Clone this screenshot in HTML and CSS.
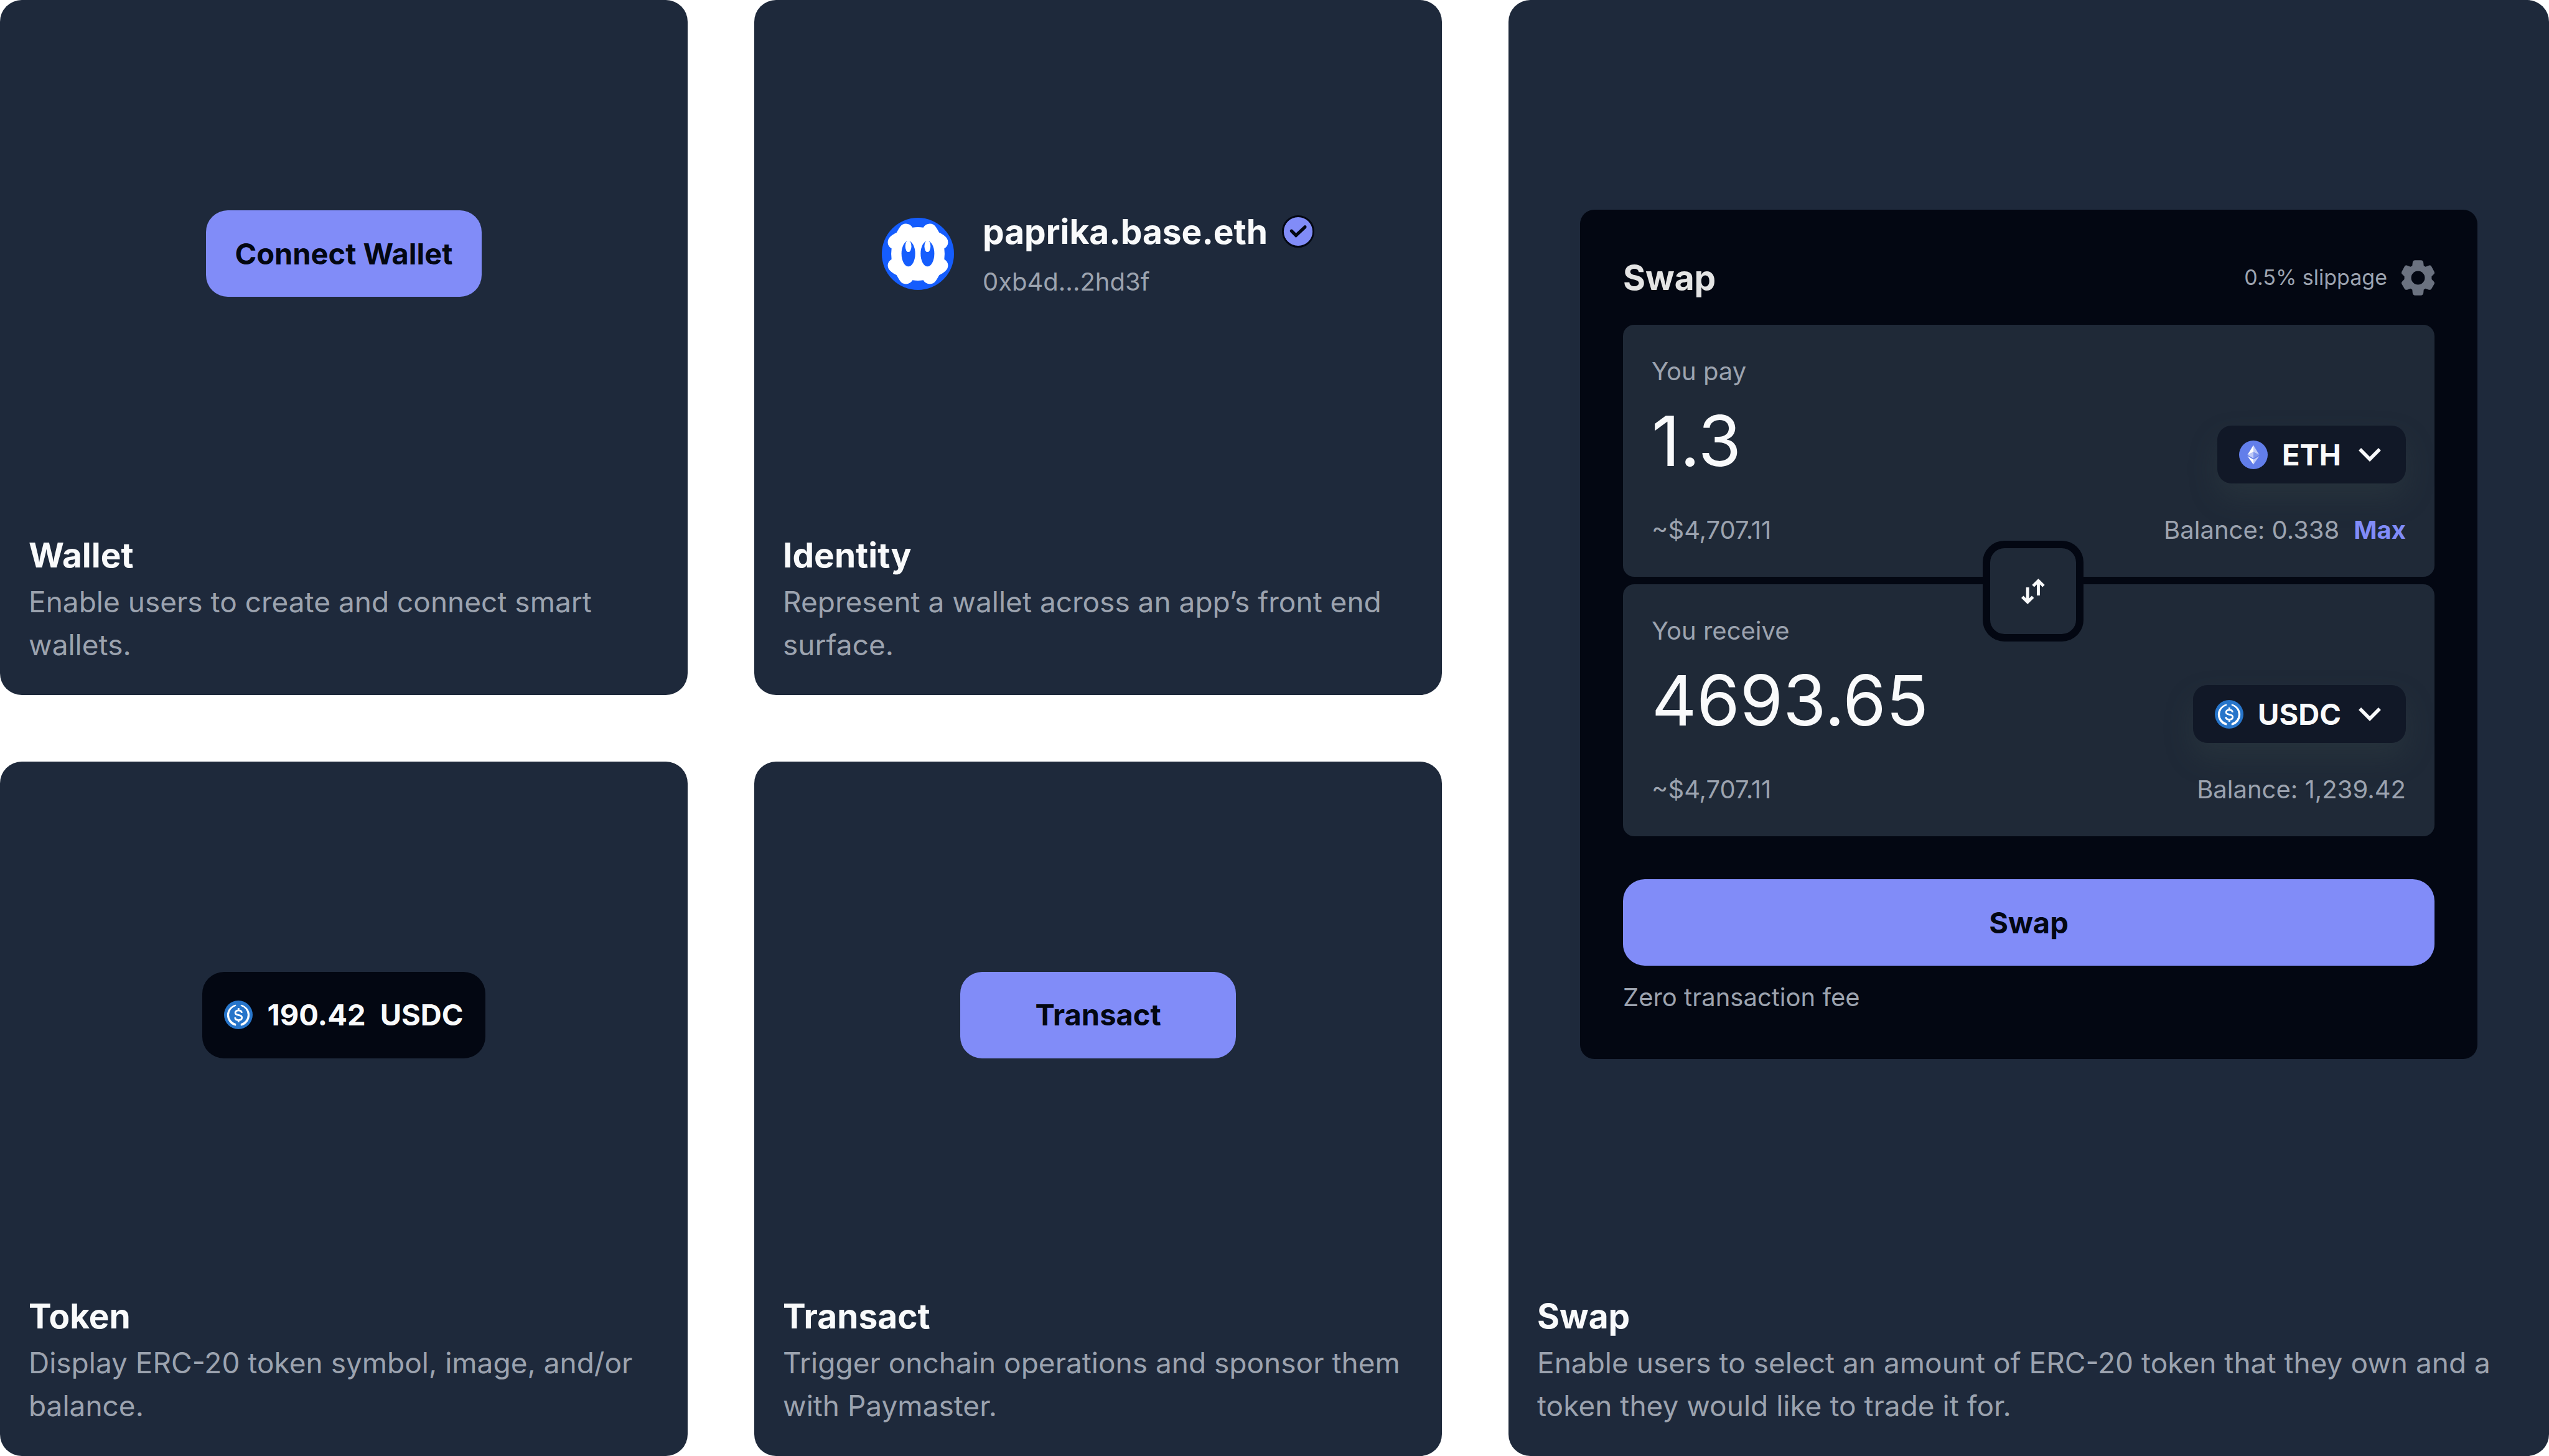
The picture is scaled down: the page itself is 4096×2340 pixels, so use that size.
FILE: index.html
```html
<!DOCTYPE html>
<html lang="en">
<head>
<meta charset="utf-8">
<title>Onchain components</title>
<link rel="stylesheet" href="styles.css">
</head>
<body>
<svg class="defs" aria-hidden="true">
  <symbol id="usdc" viewBox="0 0 80 80">
    <circle cx="40" cy="40" r="40" fill="#2775ca"/>
    <path d="M32 11.700a30 30 0 0 0 0 58.600c1 .2 1.500-.400 1.500-1.300v-2.800c0-.8-.5-1.500-1.300-1.800a25.500 25.500 0 0 1 0-48.800c.8-.3 1.300-1 1.300-1.800V13c0-.9-.5-1.500-1.500-1.300z" fill="#fff"/>
    <path d="M48 11.700a30 30 0 0 1 0 58.600c-1 .2-1.500-.400-1.500-1.300v-2.800c0-.8.5-1.500 1.300-1.800a25.500 25.500 0 0 0 0-48.800c-.8-.3-1.300-1-1.300-1.800V13c0-.9.5-1.500 1.500-1.300z" fill="#fff"/>
    <path d="M49.500 34.500c-.3-4.500-4-7-9-7s-9 2.600-9 7c0 4.200 3.500 5.300 9 6.200s9.500 2.300 9.500 6.900c0 4.500-4 7.200-9.500 7.200s-9.500-2.700-9.800-7.500M40.500 21v7M40.500 54v7" fill="none" stroke="#fff" stroke-width="4.800"/>
  </symbol>
  <symbol id="chevron" viewBox="0 0 80 80">
    <path d="M12.300 24.500 40 52.300 67.700 24.500" fill="none" stroke="#f9fafb" stroke-width="9.700"/>
  </symbol>
</svg>
<main class="board">
  <section class="card">
    <div class="preview"><button class="btn" type="button">Connect Wallet</button></div>
    <div class="caption">
      <h2>Wallet</h2>
      <p>Enable users to create and connect smart wallets.</p>
    </div>
  </section>

  <section class="card">
    <div class="preview">
      <div class="identity">
        <svg class="avatar" viewBox="0 0 200 200" role="img" aria-label="Avatar">
          <circle cx="100" cy="100" r="100" fill="#155dfd"/>
          <path fill="#fff" d="M85 27C81 20 74 16.500 67 16.500 52 16.500 48 30 41 41 30 47 16.500 54 16.500 68 16.500 75 20 81 27 85Q25 100 27 115C20 119 16.500 125 16.500 132 16.500 146 30 153 41 159 48 170 52 183.500 67 183.500 74 183.500 81 180 85 173Q100 175 115 173C119 180 126 183.500 133 183.500 148 183.500 152 170 159 159 170 153 183.500 146 183.500 132 183.500 125 180 119 173 115Q175 100 173 85C180 81 183.500 75 183.500 68 183.500 54 170 47 159 41 152 30 148 16.500 133 16.500 126 16.500 119 20 115 27Q100 25 85 27z"/>
          <g fill="#155dfd"><ellipse cx="73.500" cy="99.500" rx="19" ry="35.500"/><ellipse cx="126.500" cy="99.500" rx="19" ry="35.500"/></g>
          <g fill="#fff"><ellipse cx="73.500" cy="79" rx="8.500" ry="16"/><ellipse cx="126.500" cy="79" rx="8.500" ry="16"/></g>
        </svg>
        <div class="who">
          <div class="name">paprika.base.eth
            <svg class="badge" viewBox="0 0 90 90" role="img" aria-label="Verified">
              <circle cx="45" cy="45" r="42.500" fill="#818cf8" stroke="#030712" stroke-width="5"/>
              <path d="M26.500 43.500 39 56 64 32.500" fill="none" stroke="#030712" stroke-width="9" stroke-linecap="round"/>
            </svg>
          </div>
          <div class="address">0xb4d...2hd3f</div>
        </div>
      </div>
    </div>
    <div class="caption">
      <h2>Identity</h2>
      <p>Represent a wallet across an app’s front end surface.</p>
    </div>
  </section>

  <section class="card wide">
    <div class="preview">
      <form class="panel">
        <header class="panel-head">
          <h3>Swap</h3>
          <button class="settings" type="button">0.5% slippage
            <svg viewBox="0 0 92 98" aria-hidden="true">
              <path fill="#6b7280" fill-rule="evenodd" d="M38 0h16c4 0 6 2 7 6l1 9 5 3 8-3c4-1 7-1 9 3l7 13c2 4 1 7-2 9l-5 5v8l5 5c3 3 4 5 2 9l-7 12c-2 4-5 4-9 3l-8-3-5 3-1 10c-1 4-3 6-7 6H38c-4 0-6-2-7-6l-1-10-5-3-8 3c-4 1-7 1-9-3L1 67c-2-4-1-6 2-9l5-5v-8l-5-5c-3-2-4-5-2-9l7-13c2-4 5-4 9-3l8 3 5-3 1-9c1-4 3-6 7-6zM46 30a19 19 0 1 0 0 38 19 19 0 1 0 0-38z"/>
            </svg>
          </button>
        </header>
        <div class="fields">
          <div class="field">
            <label for="pay">You pay</label>
            <div class="row amount-row">
              <input id="pay" type="text" value="1.3">
              <button class="token" type="button">
                <svg class="icon" viewBox="0 0 80 80" aria-hidden="true">
                  <circle cx="40" cy="40" r="40" fill="#627eea"/>
                  <path d="M40 13 23.500 40 40 32z" fill="#fff"/>
                  <path d="M40 13 56.500 40 40 32z" fill="#c0cbf7"/>
                  <path d="M23.500 40 40 32v18z" fill="#c0cbf7"/>
                  <path d="M56.500 40 40 32v18z" fill="#8197ee"/>
                  <path d="M23.500 43.500 40 53V67z" fill="#fff"/>
                  <path d="M56.500 43.500 40 53V67z" fill="#c0cbf7"/>
                </svg>
                ETH
                <svg class="icon" aria-hidden="true"><use href="#chevron"/></svg>
              </button>
            </div>
            <div class="row">
              <span>~$4,707.11</span>
              <span class="balance">Balance: 0.338 <button class="max" type="button">Max</button></span>
            </div>
          </div>
          <div class="field">
            <label for="receive">You receive</label>
            <div class="row amount-row">
              <input id="receive" type="text" value="4693.65" readonly>
              <button class="token" type="button">
                <svg class="icon" aria-hidden="true"><use href="#usdc"/></svg>
                USDC
                <svg class="icon" aria-hidden="true"><use href="#chevron"/></svg>
              </button>
            </div>
            <div class="row">
              <span>~$4,707.11</span>
              <span class="balance">Balance: 1,239.42</span>
            </div>
          </div>
          <button class="flip" type="button" aria-label="Switch tokens">
            <svg viewBox="0 0 66 71" aria-hidden="true">
              <path d="M17.700 24v41M3 50.500l14.700 14.500 14.700-14.500M47.700 47V6M33 20.500 47.700 6l14.700 14.500" fill="none" stroke="#f9fafb" stroke-width="8.500"/>
            </svg>
          </button>
        </div>
        <button class="btn block" type="button">Swap</button>
        <p class="fee">Zero transaction fee</p>
      </form>
    </div>
    <div class="caption">
      <h2>Swap</h2>
      <p>Enable users to select an amount of ERC-20 token that they own and a token they would like to trade it for.</p>
    </div>
  </section>

  <section class="card">
    <div class="preview">
      <div class="chip">
        <svg class="icon" aria-hidden="true"><use href="#usdc"/></svg>
        <span>190.42</span><span class="unit">USDC</span>
      </div>
    </div>
    <div class="caption">
      <h2>Token</h2>
      <p>Display ERC-20 token symbol, image, and/or balance.</p>
    </div>
  </section>

  <section class="card">
    <div class="preview"><button class="btn" type="button">Transact</button></div>
    <div class="caption">
      <h2>Transact</h2>
      <p>Trigger onchain operations and sponsor them with Paymaster.</p>
    </div>
  </section>
</main>
</body>
</html>
```
FILE: styles.css
```css
* { box-sizing: border-box; }
body {
  margin: 0;
  background: #fff;
  color: #f9fafb;
  font-family: Inter, sans-serif;
  font-size: 40px;
  line-height: 58px;
}
h2, h3, p { margin: 0; }
button, input {
  font: inherit;
  color: inherit;
  background: none;
  border: 0;
  padding: 0;
  margin: 0;
}
svg { display: block; flex: none; }
.defs { position: absolute; width: 0; height: 0; }

.board {
  display: grid;
  grid-template-columns: minmax(0, 1105fr) minmax(0, 1105fr) minmax(0, 1672fr);
  grid-template-rows: 1fr 1fr;
  gap: 107px;
  min-height: 100vh;
}
.card {
  display: flex;
  flex-direction: column;
  background: #1e293b;
  border-radius: 35px;
}
.wide { grid-column: 3; grid-row: 1 / span 2; }
.preview {
  flex: 1;
  display: flex;
  align-items: center;
  justify-content: center;
}
.wide .preview { padding: 0 115px; }
.caption { padding: 46px; }
.caption h2 {
  margin-bottom: 11px;
  font-size: 55px;
  line-height: 60px;
  font-weight: 700;
}
.caption p {
  color: #9ca3af;
  font-size: 46px;
  line-height: 69px;
}

.btn {
  min-width: 443px;
  height: 139px;
  border-radius: 35px;
  background: #818cf8;
  color: #030712;
  font-size: 47px;
  font-weight: 700;
}
.block { width: 100%; margin-top: 69px; }

.identity { display: flex; align-items: center; gap: 46px; }
.avatar { width: 116px; height: 116px; }
.name {
  display: flex;
  align-items: center;
  gap: 23px;
  font-size: 55px;
  line-height: 76px;
  font-weight: 700;
}
.badge { width: 52px; height: 52px; }
.address { margin-top: 14px; color: #9ca3af; }

.chip {
  display: flex;
  align-items: center;
  gap: 23px;
  height: 139px;
  padding: 0 35px;
  border-radius: 35px;
  background: #030712;
  font-size: 47px;
  font-weight: 700;
}
.icon { width: 46px; height: 46px; }

.panel {
  width: 100%;
  padding: 69px;
  border-radius: 23px;
  background: #030712;
}
.panel-head {
  display: flex;
  align-items: center;
  justify-content: space-between;
  height: 80px;
  margin-bottom: 36px;
}
.panel-head h3 {
  color: #e4e4e4;
  font-size: 55px;
  font-weight: 700;
}
.settings {
  display: flex;
  align-items: center;
  gap: 23px;
  color: #9ca3af;
  font-size: 34px;
}
.settings svg { width: 53px; height: 57px; }

.fields {
  position: relative;
  display: flex;
  flex-direction: column;
  gap: 12px;
}
.field {
  padding: 46px;
  border-radius: 18px;
  background: #1f2937;
  color: #9ca3af;
}
.field label { display: block; }
.row { display: flex; justify-content: space-between; }
.amount-row { align-items: flex-end; margin: 12px 0 46px; }
.field input {
  flex: 1;
  min-width: 0;
  height: 139px;
  color: #f9fafb;
  font-size: 112px;
}
.token {
  display: flex;
  align-items: center;
  gap: 23px;
  height: 93px;
  padding: 0 35px;
  border-radius: 23px;
  background: #111827;
  color: #f9fafb;
  font-size: 47px;
  font-weight: 700;
  box-shadow: 0 23px 46px rgba(56, 72, 72, 0.3);
}
.balance { display: flex; gap: 23px; }
.max { color: #818cf8; font-weight: 700; }
.flip {
  position: absolute;
  top: calc(50% - 64px);
  left: calc(50% - 74px);
  display: grid;
  place-items: center;
  width: 162px;
  height: 162px;
  border: 12px solid #030712;
  border-radius: 35px;
  background: #1f2937;
}
.flip svg { width: 38px; height: 41px; }
.fee { margin-top: 21px; line-height: 60px; color: #9ca3af; }
```
